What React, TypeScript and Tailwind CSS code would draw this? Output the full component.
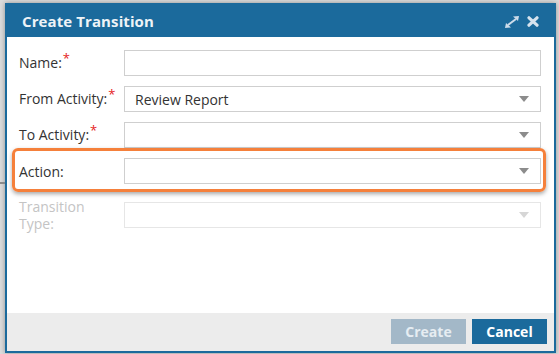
import React from "react";

const font = { fontFamily: '"Open Sans", "Noto Sans", Arial, sans-serif' };

function Caret({ disabled }: { disabled?: boolean }) {
  return (
    <svg width="10" height="6" viewBox="0 0 10 6" className="shrink-0">
      <path d="M0 0 L10 0 L5 6 Z" fill={disabled ? "#d6d6d6" : "#8c8c8c"} />
    </svg>
  );
}

function Label({ text, required, disabled }: { text: string; required?: boolean; disabled?: boolean }) {
  return (
    <div
      className={`w-[105px] shrink-0 pr-[8px] text-[14px] leading-[17px] ${disabled ? "text-[#c4c4c4]" : "text-[#333333]"}`}
    >
      {text}
      {required && <span className="text-[#e52222] text-[13px] relative top-[-5px] ml-[1px]">*</span>}
    </div>
  );
}

function Row({
  label,
  required,
  value,
  select,
  disabled,
  className = "",
}: {
  label: string;
  required?: boolean;
  value?: string;
  select?: boolean;
  disabled?: boolean;
  className?: string;
}) {
  return (
    <div className={`flex items-center ${className}`}>
      <Label text={label} required={required} disabled={disabled} />
      <div
        className={`w-[417px] h-[26px] border bg-white flex items-center justify-between pl-[10px] pr-[11px] ${
          disabled ? "border-[#e6e6e6]" : "border-[#cfcfcf]"
        }`}
      >
        <span className="text-[14px] text-[#333333]">{value}</span>
        {select && <Caret disabled={disabled} />}
      </div>
    </div>
  );
}

export default function App() {
  return (
    <div className="w-[559px] h-[354px] bg-[#dcdcdc] relative overflow-hidden" style={font}>
      <div className="absolute left-0 top-[182px] w-[5px] h-[2px] bg-[#8a8a8a]" />
      <div className="pt-[3px] pl-[5px]">
        <div className="w-[551px] h-[350px] border-2 border-[#1b6a9c] flex flex-col bg-white shadow-[0_0_5px_rgba(0,0,0,0.35)]">
          <div className="h-[32px] bg-[#1b6a9c] flex items-center justify-between pl-[15px] pr-[15px]">
            <span className="text-[15px] font-bold text-[#eef3f7] tracking-[0.1px]">Create Transition</span>
            <div className="flex items-center gap-[8px] mt-[1px]">
              <svg width="14" height="12" viewBox="0 0 14 12">
                <g fill="#cddcea" stroke="#cddcea">
                  <line x1="3" y1="9" x2="11" y2="3" strokeWidth="2" />
                  <path d="M14 0 L8 0.5 L13 5 Z" stroke="none" />
                  <path d="M0 12 L6 11.5 L1 7 Z" stroke="none" />
                </g>
              </svg>
              <svg width="12" height="11" viewBox="0 0 12 11">
                <g stroke="#d6e3ee" strokeWidth="3.2" strokeLinecap="round">
                  <line x1="2" y1="1.8" x2="10" y2="9.2" />
                  <line x1="10" y1="1.8" x2="2" y2="9.2" />
                </g>
              </svg>
            </div>
          </div>
          <div className="flex-1 bg-white pt-[13px] pl-[12px]">
            <Row label="Name:" required />
            <Row label="From Activity:" required value="Review Report" select className="mt-[10px]" />
            <Row label="To Activity:" required select className="mt-[10px]" />
            <Row label="Action:" select className="mt-[10px]" />
            <Row label="Transition Type:" select disabled className="mt-[14px]" />
          </div>
          <div className="h-[38px] bg-[#ececec] flex items-start justify-end gap-[6px] pt-[6px] pr-[7px]">
            <div className="w-[75px] h-[25px] bg-[#a3b8c8] text-[#e6edf2] text-[14px] font-bold flex items-center justify-center">
              Create
            </div>
            <div className="w-[75px] h-[25px] bg-[#1b6a9c] text-white text-[14px] font-bold flex items-center justify-center">
              Cancel
            </div>
          </div>
        </div>
      </div>
      <div className="absolute left-[12px] top-[148px] w-[534px] h-[44px] border-[3px] border-[#f5803b] rounded-[6px] shadow-[0_2px_4px_rgba(0,0,0,0.35)]" />
    </div>
  );
}
